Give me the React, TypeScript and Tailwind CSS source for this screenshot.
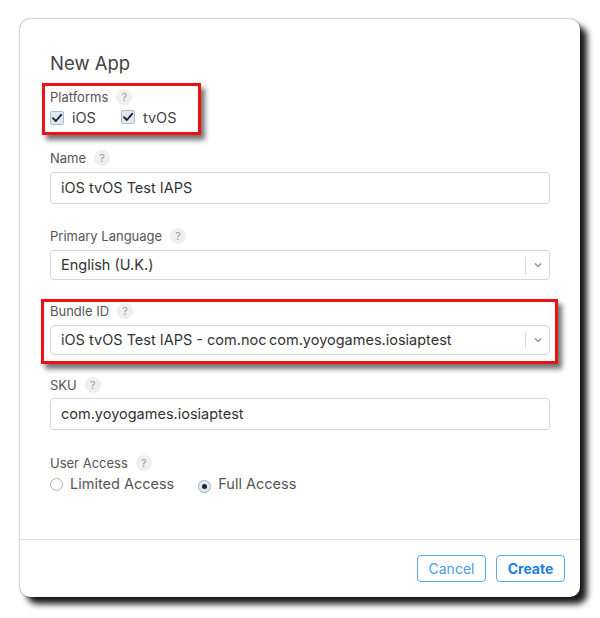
import React from "react";

const font = { fontFamily: "Inter, 'Noto Sans', sans-serif" };

function Help() {
  return (
    <span className="ml-[8px] inline-flex h-[16px] w-[16px] items-center justify-center rounded-full bg-[#efefef] text-[11px] leading-none text-[#9a9a9a]">
      ?
    </span>
  );
}

function Label({ children, className = "" }: { children: React.ReactNode; className?: string }) {
  return (
    <div className={`flex h-[18px] items-center text-[13px] leading-[18px] text-[#555] ${className}`}>
      <span>{children}</span>
      <Help />
    </div>
  );
}

function Check() {
  return (
    <span className="inline-flex h-[14px] w-[14px] items-center justify-center rounded-[2px] border border-[#a9bccf] bg-[#dde8f5]">
      <svg width="12" height="12" viewBox="0 0 12 12">
        <path d="M2 6.2 L4.8 9 L10.2 2.8" fill="none" stroke="#222" strokeWidth="1.9" strokeLinecap="round" strokeLinejoin="round" />
      </svg>
    </span>
  );
}

function Radio({ checked }: { checked?: boolean }) {
  return (
    <span
      className={`inline-flex h-[13px] w-[13px] items-center justify-center rounded-full border ${
        checked ? "border-[#9fb3c8] bg-[#dde8f5]" : "border-[#b0b0b0] bg-white"
      }`}
    >
      {checked && <span className="h-[5px] w-[5px] rounded-full bg-[#222]" />}
    </span>
  );
}

function Chevron() {
  return (
    <div className="flex h-full items-center">
      <div className="h-[17px] w-px bg-[#dcdcdc]" />
      <div className="flex w-[23px] items-center justify-center">
        <svg width="8" height="6" viewBox="0 0 8 6">
          <path d="M1 1.5 L4 4.5 L7 1.5" fill="none" stroke="#888" strokeWidth="1.2" />
        </svg>
      </div>
    </div>
  );
}

export default function App() {
  return (
    <div className="relative h-[618px] w-[600px] overflow-hidden bg-white" style={font}>
      <div className="pl-[20px] pt-[19px]">
        <div className="flex h-[578px] w-[560px] flex-col rounded-[10px] bg-white shadow-[0_0_2px_rgba(0,0,0,0.6),7px_7px_6px_rgba(0,0,0,0.9)]">
          <div className="flex flex-col px-[30px] pt-[32px]">
            <div className="h-[24px] text-[18.5px] leading-[24px] text-[#444]">New App</div>

            <Label className="mt-[13px]">Platforms</Label>
            <div className="mt-[3px] flex h-[18px] items-center text-[14.5px] text-[#444]">
              <Check />
              <span className="ml-[8px]">iOS</span>
              <span className="ml-[25px]">
                <Check />
              </span>
              <span className="ml-[8px]">tvOS</span>
            </div>

            <Label className="mt-[22px]">Name</Label>
            <div className="mt-[5px] flex h-[32px] items-center rounded-[4px] border border-[#d6d6d6] px-[10px] text-[14.5px] text-[#333]">
              iOS tvOS Test IAPS
            </div>

            <Label className="mt-[23px]">Primary Language</Label>
            <div className="mt-[5px] flex h-[30px] items-center rounded-[4px] border border-[#d6d6d6] pl-[10px] text-[14.5px] text-[#333]">
              <span className="flex-1">English (U.K.)</span>
              <Chevron />
            </div>

            <Label className="mt-[22px]">Bundle ID</Label>
            <div className="mt-[5px] flex h-[30px] items-center rounded-[4px] border border-[#d6d6d6] pl-[10px] text-[14.5px] text-[#333]">
              <span className="w-[205px] overflow-hidden whitespace-nowrap">iOS tvOS Test IAPS - com.nocturnalgames</span>
              <span className="ml-[3px] flex-1 whitespace-nowrap">com.yoyogames.iosiaptest</span>
              <Chevron />
            </div>

            <Label className="mt-[21px]">SKU</Label>
            <div className="mt-[4px] flex h-[32px] items-center rounded-[4px] border border-[#d6d6d6] px-[10px] text-[14.5px] text-[#333]">
              com.yoyogames.iosiaptest
            </div>

            <Label className="mt-[24px]">User Access</Label>
            <div className="mt-[3px] flex h-[18px] items-center text-[14.5px] text-[#555]">
              <Radio />
              <span className="ml-[7px]">Limited Access</span>
              <span className="ml-[24px]">
                <Radio checked />
              </span>
              <span className="ml-[7px]">Full Access</span>
            </div>
          </div>

          <div className="mt-auto flex justify-end gap-[10px] border-t border-[#e2e2e2] px-[15px] py-[15px]">
            <button className="h-[27px] w-[69px] rounded-[4px] border border-[#5aa7f0] text-[14px] text-[#4a9cec]">
              Cancel
            </button>
            <button className="h-[27px] w-[69px] rounded-[4px] border border-[#5aa7f0] text-[14px] font-bold text-[#1a7fe0]">
              Create
            </button>
          </div>
        </div>
      </div>

      <div className="absolute left-[42px] top-[83px] h-[52px] w-[159px] border-[3px] border-[#ee1111] shadow-[4px_5px_5px_rgba(0,0,0,0.55)]" />
      <div className="absolute left-[41px] top-[299px] h-[65px] w-[517px] border-[3px] border-[#ee1111] shadow-[4px_5px_5px_rgba(0,0,0,0.55)]" />
    </div>
  );
}
